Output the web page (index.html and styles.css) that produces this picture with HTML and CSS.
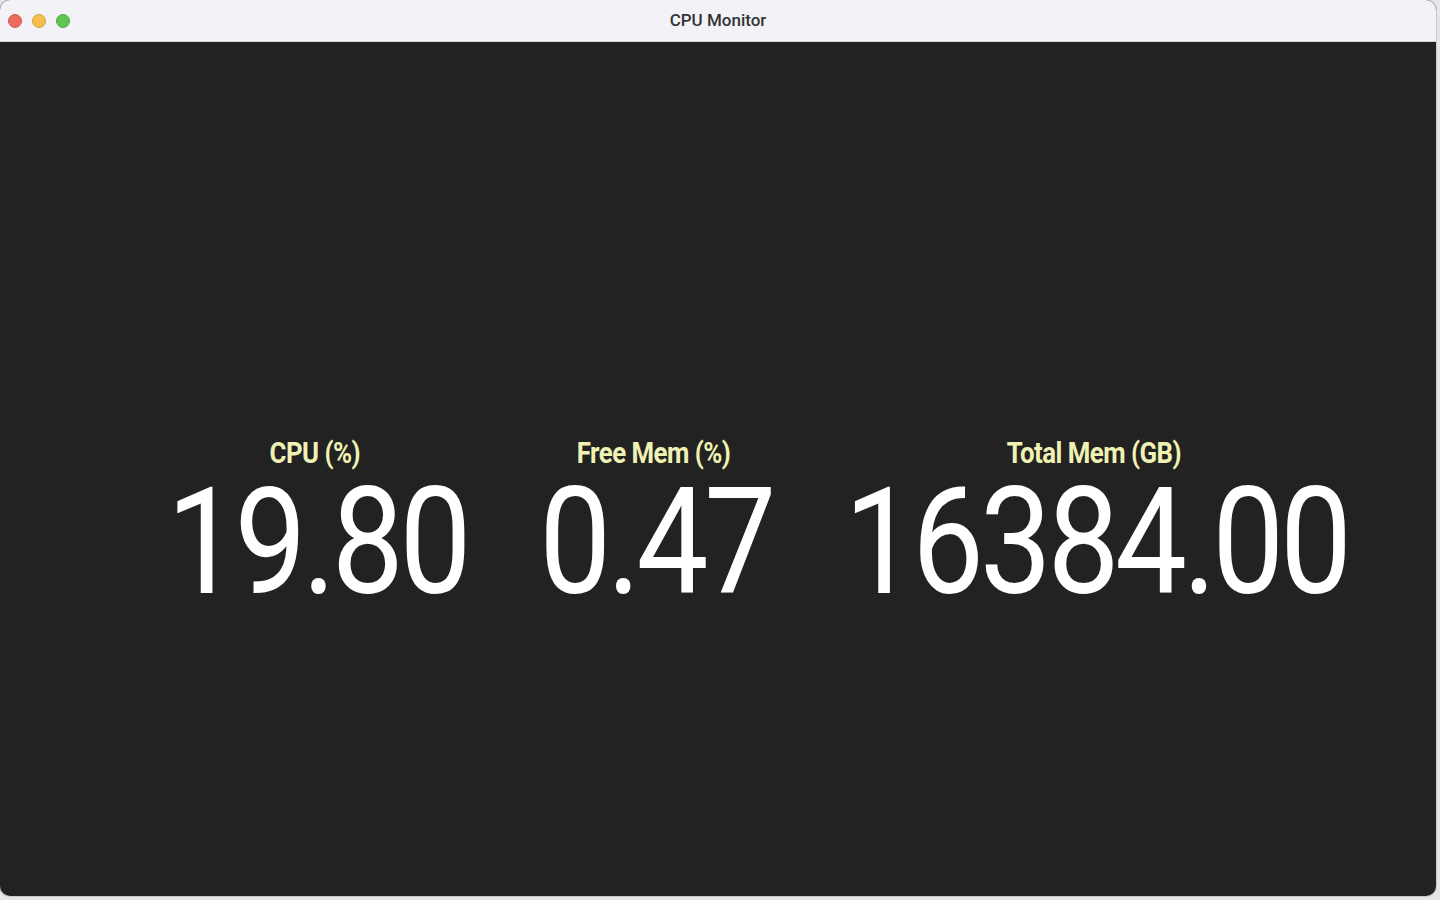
FILE: index.html
```html
<!DOCTYPE html>
<html>
<head>
<meta charset="utf-8">
<title>CPU Monitor</title>
<link rel="stylesheet" href="styles.css">
</head>
<body>
<div class="window">
  <header class="titlebar">
    <div class="lights">
      <span class="light red"></span>
      <span class="light yellow"></span>
      <span class="light green"></span>
    </div>
    <div class="title">CPU Monitor</div>
  </header>
  <main class="content">
    <div class="stats">
      <div class="stat">
        <div class="label">CPU (%)</div>
        <div class="value">19.80</div>
      </div>
      <div class="stat">
        <div class="label">Free Mem (%)</div>
        <div class="value">0.47</div>
      </div>
      <div class="stat">
        <div class="label">Total Mem (GB)</div>
        <div class="value">16384.00</div>
      </div>
    </div>
  </main>
</div>
</body>
</html>
```
FILE: styles.css
```css
html, body {
  margin: 0;
  padding: 0;
}
body {
  width: 1440px;
  height: 900px;
  background: #e6e6e8;
  overflow: hidden;
  font-family: Roboto, "Liberation Sans", sans-serif;
}
.window {
  width: 1436px;
  height: 896px;
  border-radius: 10px;
  overflow: hidden;
  background: #222222;
  display: flex;
  flex-direction: column;
  box-shadow: 0 0 0 1px #c9c9cc;
}
.titlebar {
  height: 41px;
  flex: none;
  background: #f3f2f7;
  border-bottom: 1px solid #d6d5da;
  display: flex;
  align-items: center;
  position: relative;
}
.lights {
  display: flex;
  gap: 10px;
  padding-left: 8px;
}
.light {
  width: 14px;
  height: 14px;
  border-radius: 50%;
  display: block;
  box-sizing: border-box;
}
.red { background: #ec6a5e; border: 0.5px solid #d1584d; }
.yellow { background: #f4bf4f; border: 0.5px solid #d6a33d; }
.green { background: #61c554; border: 0.5px solid #4fa843; }
.title {
  position: absolute;
  left: 0;
  right: 0;
  top: 10px;
  text-align: center;
  font-size: 17px;
  font-weight: 500;
  color: #333335;
}
.content {
  flex: 1;
  display: flex;
  justify-content: center;
  padding-top: 393px;
  padding-left: 75px;
}
.stats {
  display: flex;
  align-items: flex-start;
  gap: 79px;
  transform: scaleX(0.86);
  height: 180px;
}
.stat {
  display: flex;
  flex-direction: column;
  align-items: center;
}
.label {
  font-size: 30px;
  font-weight: 700;
  color: #f0f2b4;
  line-height: 36px;
  letter-spacing: -0.6px;
}
.value {
  font-size: 149px;
  font-weight: 400;
  color: #ffffff;
  line-height: 130px;
  margin-top: 6px;
  letter-spacing: -5px;
  padding-left: 5px;
}
```
